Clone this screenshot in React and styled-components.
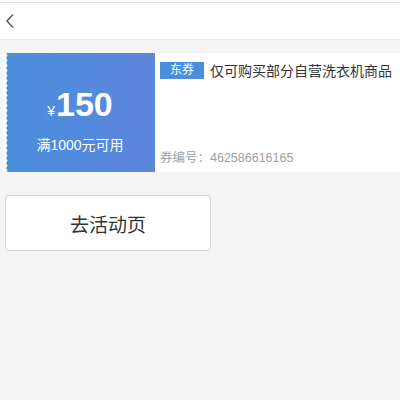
import React from "react"
import { styled, createGlobalStyle } from "styled-components"

const GlobalStyle = createGlobalStyle`
  html, body {
    margin: 0;
    padding: 0;
    background: #f5f5f5;
    font-family: "Liberation Sans", "Noto Sans CJK SC", sans-serif;
  }
`

export default function App() {
  return (
    <Page>
      <GlobalStyle />
      <Header>
        <BackButton>
          <svg width="10" height="16" viewBox="0 0 10 16">
            <path d="M8 1.5 L2 8 L8 14.5" fill="none" stroke="#555" strokeWidth="1.4" />
          </svg>
        </BackButton>
      </Header>

      <Content>
        <Coupon>
          <Amount>
            <Price>
              <span className="yen">¥</span>
              <span className="num">150</span>
            </Price>
            <Condition>满1000元可用</Condition>
          </Amount>
          <Info>
            <Title>
              <Tag>东券</Tag>
              <span>仅可购买部分自营洗衣机商品</span>
            </Title>
            <Code>券编号：462586616165</Code>
          </Info>
        </Coupon>

        <ActionButton>去活动页</ActionButton>
      </Content>
    </Page>
  )
}

const Page = styled.div`
  min-height: 400px;
  background: #f5f5f5;
  border-top: 2px solid #fff;
  box-sizing: border-box;
`

const Header = styled.div`
  height: 36px;
  background: #fff;
  border-top: 1px solid #e2e2e2;
  border-bottom: 1px solid #e8e8e8;
  display: flex;
  align-items: center;
  padding-left: 5px;
`

const BackButton = styled.div`
  width: 12px;
  height: 16px;
  display: flex;
  align-items: center;
`

const Content = styled.div`
  padding: 13px 0 0 5px;
  display: flex;
  flex-direction: column;
  gap: 23px;
`

const Coupon = styled.div`
  display: flex;
  height: 119px;
  background: #fff;
`

const Amount = styled.div`
  position: relative;
  width: 150px;
  flex-shrink: 0;
  background: linear-gradient(90deg, #4a8fdb 0%, #5d85dc 100%);
  color: #fff;
  display: flex;
  flex-direction: column;
  align-items: center;
  padding-top: 33px;
  box-sizing: border-box;

  &::before {
    content: "";
    position: absolute;
    left: -3px;
    top: 0;
    bottom: 0;
    width: 6px;
    background: radial-gradient(circle at 3px 50%, #fafafa 2.2px, transparent 2.7px);
    background-size: 6px 5px;
  }
`

const Price = styled.div`
  display: flex;
  align-items: baseline;
  line-height: 36px;

  .yen {
    font-size: 14px;
    margin-right: 1px;
  }
  .num {
    font-size: 34px;
    font-weight: bold;
  }
`

const Condition = styled.div`
  font-size: 14px;
  margin-top: 5px;
`

const Info = styled.div`
  flex: 1;
  display: flex;
  flex-direction: column;
  justify-content: space-between;
  padding: 7px 0 6px 5px;
  overflow: hidden;
`

const Title = styled.div`
  display: flex;
  align-items: center;
  gap: 6px;
  font-size: 14px;
  color: #333;
  white-space: nowrap;
`

const Tag = styled.span`
  background: #4a8fd9;
  color: #fff;
  font-size: 12px;
  padding: 0 10px;
  line-height: 17px;
`

const Code = styled.div`
  font-size: 12.5px;
  color: #a0a0a0;
`

const ActionButton = styled.div`
  width: 206px;
  height: 56px;
  box-sizing: border-box;
  background: #fff;
  border: 1px solid #d0d0d0;
  border-radius: 4px;
  display: flex;
  align-items: center;
  justify-content: center;
  font-size: 19px;
  color: #333;
`
